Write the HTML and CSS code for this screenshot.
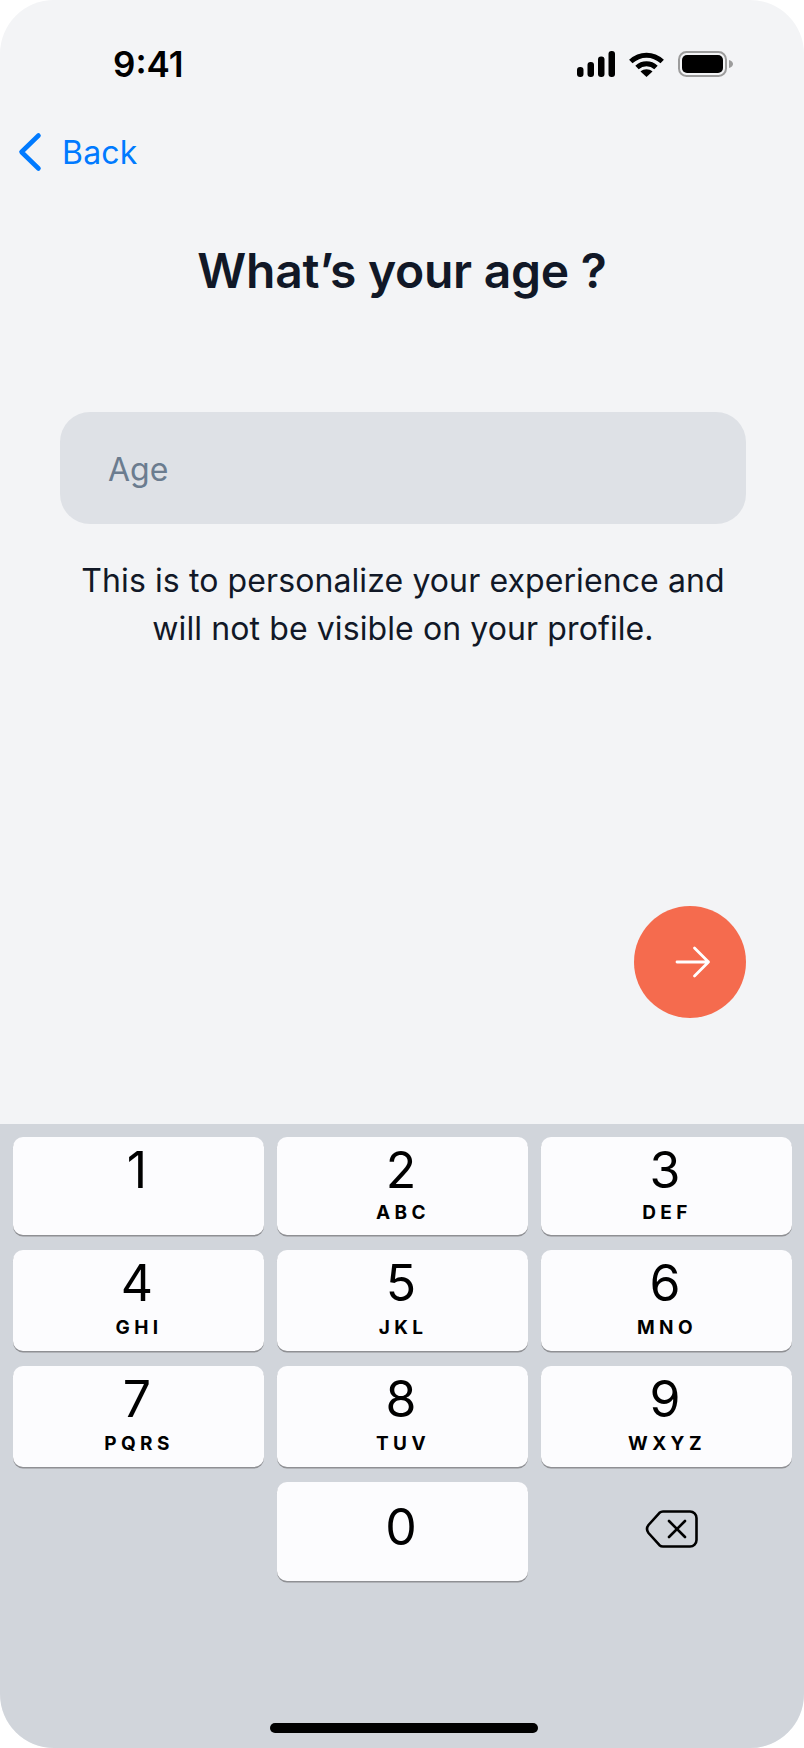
FILE: index.html
```html
<!DOCTYPE html>
<html lang="en">
<head>
<meta charset="utf-8">
<title>Age</title>
<link rel="stylesheet" href="styles.css">
</head>
<body>
<main class="screen">
  <header class="status">
    <span class="time">9:41</span>
    <span class="status-icons">
      <svg width="38" height="26" viewBox="0 0 38 26"><rect x="0" y="16" width="6.5" height="10" rx="3" /><rect x="10.5" y="11" width="6.5" height="15" rx="3"/><rect x="21" y="5.5" width="6.5" height="20.5" rx="3"/><rect x="31.5" y="0" width="6.5" height="26" rx="3"/></svg>
      <svg width="35" height="26" viewBox="0 0 35 26"><path d="M1.800 10.500 C11 2 24 2 33.200 10.500" fill="none" stroke="#000" stroke-width="5"/><path d="M8 16.500 C13.500 11.500 21.500 11.500 27 16.500" fill="none" stroke="#000" stroke-width="5"/><path d="M11.500 20.500 C15 17.500 20 17.500 23.500 20.500 L17.500 26 Z"/></svg>
      <svg width="56" height="26" viewBox="0 0 56 26"><rect x="1" y="1" width="47" height="24" rx="7.500" fill="none" stroke="#9c9c9c" stroke-width="2"/><rect x="4" y="4" width="41" height="18" rx="5"/><path d="M51 9 C54 10 55 11.500 55 13 C55 14.500 54 16 51 17 Z" fill="#9c9c9c"/></svg>
    </span>
  </header>
  <nav class="nav">
    <svg width="26" height="42" viewBox="0 0 26 42"><path d="M21.500 4.500 L4.500 21 L21.500 37.500" fill="none" stroke="#007aff" stroke-width="4.600" stroke-linecap="round" stroke-linejoin="round"/></svg>
    <span class="back">Back</span>
  </nav>
  <h1 class="title">What’s your age ?</h1>
  <div class="field">Age</div>
  <p class="hint">This is to personalize your experience and<br>will not be visible on your profile.</p>
  <div class="action">
    <button class="next" aria-label="Next">
      <svg width="36" height="32" viewBox="0 0 36 32"><path d="M2 16 H33.500 M19.500 2 L33.500 16 L19.500 30" fill="none" stroke="#fff" stroke-width="2.800" stroke-linecap="round" stroke-linejoin="round"/></svg>
    </button>
  </div>
  <section class="keyboard">
    <div class="keys">
      <div class="key"><span class="digit">1</span></div>
      <div class="key"><span class="digit">2</span><span class="letters">ABC</span></div>
      <div class="key"><span class="digit">3</span><span class="letters">DEF</span></div>
      <div class="key"><span class="digit">4</span><span class="letters">GHI</span></div>
      <div class="key"><span class="digit">5</span><span class="letters">JKL</span></div>
      <div class="key"><span class="digit">6</span><span class="letters">MNO</span></div>
      <div class="key"><span class="digit">7</span><span class="letters">PQRS</span></div>
      <div class="key"><span class="digit">8</span><span class="letters">TUV</span></div>
      <div class="key"><span class="digit">9</span><span class="letters">WXYZ</span></div>
      <div class="blank"></div>
      <div class="key key-zero"><span class="digit">0</span></div>
      <div class="erase">
        <svg width="54" height="40" viewBox="0 0 54 40"><path d="M18 2.500 H45 A6.500 6.500 0 0 1 51.500 9 V31 A6.500 6.500 0 0 1 45 37.500 H18 Q16 37.500 14.500 36.200 L3.500 24 Q0.500 20 3.500 16 L14.500 3.800 Q16 2.500 18 2.500 Z" fill="none" stroke="#000" stroke-width="2.600" stroke-linejoin="round"/><path d="M24 12 L40 28 M40 12 L24 28" fill="none" stroke="#000" stroke-width="2.600" stroke-linecap="round"/></svg>
      </div>
    </div>
    <div class="home"></div>
  </section>
</main>
</body>
</html>
```
FILE: styles.css
```css
* { box-sizing: border-box; }
html, body { margin: 0; padding: 0; background: #fff; }
body { width: 804px; height: 1748px; overflow: hidden; font-family: Inter, "Liberation Sans", sans-serif; }
.screen { width: 804px; height: 1748px; border-radius: 54px; overflow: hidden; background: #f3f4f6; display: flex; flex-direction: column; color: #111827; }
.status { height: 51px; margin-top: 45px; padding: 0 70px 0 113px; display: flex; justify-content: space-between; align-items: flex-start; }
.time { font-size: 35px; font-weight: 600; line-height: 38px; color: #000; }
.status-icons { display: flex; gap: 14px; padding-top: 6px; }
.status-icons svg { display: block; }
.nav { margin-top: 35px; padding-left: 17px; height: 42px; display: flex; align-items: center; gap: 19px; }
.back { font-size: 32px; line-height: 40px; padding-top: 2px; color: #007aff; letter-spacing: 0.2px; }
.title { margin: 69px 0 0; font-size: 48px; line-height: 58px; font-weight: 600; text-align: center; letter-spacing: -0.25px; }
.field { margin: 112px 58px 0 60px; height: 112px; border-radius: 30px; background: #dee1e6; padding: 2px 0 0 48px; display: flex; align-items: center; font-size: 32px; color: #6b7c8f; }
.hint { margin: 33px 0 0; padding-left: 2px; font-size: 32px; line-height: 48px; text-align: center; letter-spacing: 0.1px; }
.action { margin-top: 253px; padding-right: 58px; display: flex; justify-content: flex-end; }
.next { width: 112px; height: 112px; padding: 0 0 0 6px; border: 0; border-radius: 50%; background: #f56b4e; display: flex; align-items: center; justify-content: center; }
.keyboard { margin-top: 106px; flex: 1; background: #d1d5db; padding: 13px 13px 0; position: relative; }
.keys { display: grid; grid-template-columns: 251px 251px 251px; grid-template-rows: 98px 101px 101px 99px; column-gap: 13px; row-gap: 15px; }
.key { background: #fcfcfe; border-radius: 10px; box-shadow: 0 1.5px 0 #8f9094; display: flex; flex-direction: column; align-items: center; color: #000; padding-right: 3px; }
.digit { font-size: 50px; line-height: 60px; margin-top: 3px; }
.key-zero .digit { margin-top: 15px; }
.letters { font-size: 19px; line-height: 20px; font-weight: 700; letter-spacing: 4.4px; margin-right: -4px; margin-top: 5px; }
.key:nth-child(-n+3) .letters { margin-top: 3px; }
.erase { display: flex; justify-content: center; align-items: flex-start; padding: 27px 0 0 10px; }
.home { position: absolute; left: 270px; bottom: 15px; width: 268px; height: 10px; border-radius: 5px; background: #000; }
```
